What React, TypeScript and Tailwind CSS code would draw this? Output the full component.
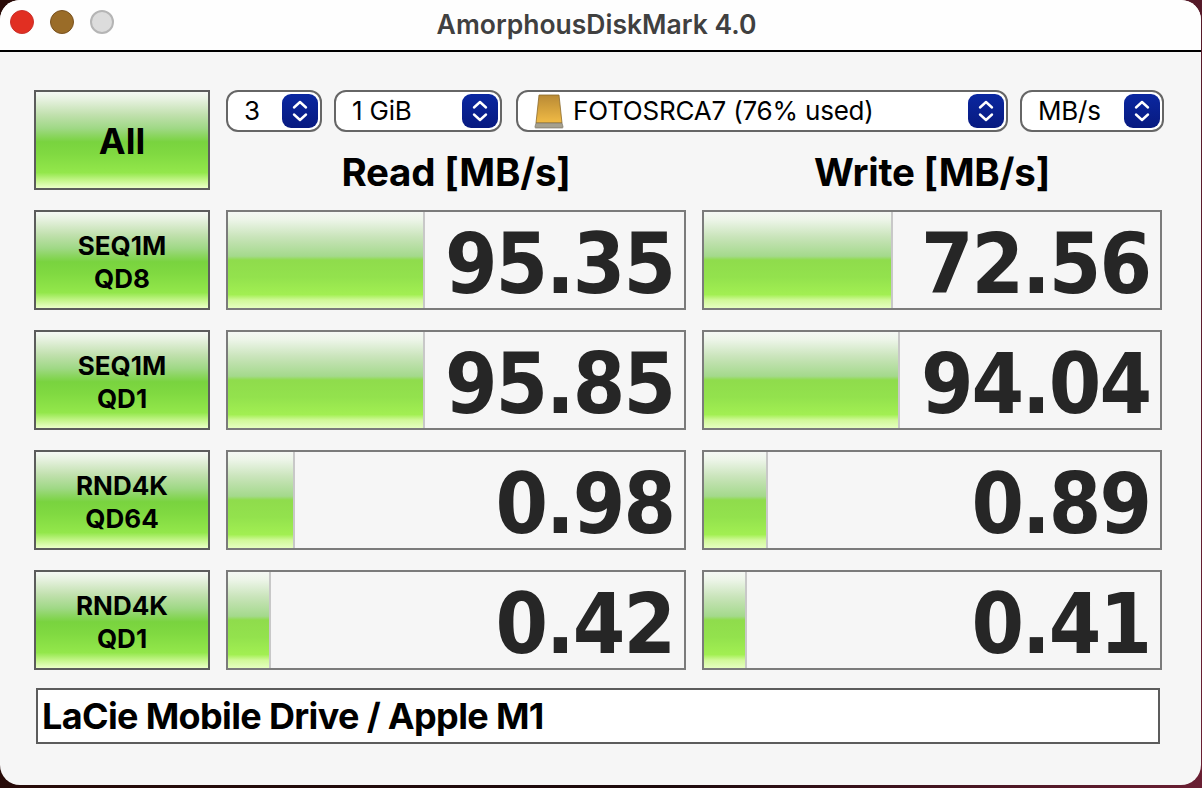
import React from "react"

const sans = "font-['Inter','Liberation_Sans',sans-serif]"
const buttonGloss =
  "bg-[linear-gradient(to_bottom,#f5f8f4_0%,#e6f1df_8%,#c0e0ad_24%,#9fd885_38%,#79d33f_52%,#80d941_64%,#93e74b_84%,#c4f58a_92%,#ebffc8_100%)]"
const barGloss =
  "bg-[linear-gradient(to_bottom,#f5f8f4_0%,#edf5e9_8%,#c9e4ba_26%,#a4d98c_46%,#8fdc4c_50%,#93e24d_68%,#a2ef52_86%,#d2f99a_92%,#e6ffc0_100%)]"

function Stepper() {
  return (
    <span className="flex h-[34px] w-9 shrink-0 items-center justify-center rounded-[9px] bg-gradient-to-b from-[#0a27a0] to-[#081a80]">
      <svg width="16" height="24" viewBox="0 0 16 24" fill="none" stroke="white" strokeWidth="2.4" strokeLinecap="round" strokeLinejoin="round">
        <path d="M2 8.5 8 3l6 5.5" />
        <path d="M2 15.5 8 21l6-5.5" />
      </svg>
    </span>
  )
}

function DriveIcon() {
  return (
    <svg width="30" height="36" viewBox="0 0 30 36" className="shrink-0">
      <defs>
        <linearGradient id="drive" x1="0" y1="0" x2="0" y2="1">
          <stop offset="0" stopColor="#b98a35" />
          <stop offset="1" stopColor="#f1bb45" />
        </linearGradient>
      </defs>
      <path d="M5 2h20l3 28H2z" fill="url(#drive)" stroke="#8a6a2c" strokeWidth="0.8" />
      <path d="M2 30h26l1 3.5a1 1 0 0 1-1 1.5H2a1 1 0 0 1-1-1.5z" fill="#a5a08f" stroke="#6f6a5c" strokeWidth="0.6" />
    </svg>
  )
}

function Select({ width, children }: { width: string; children: React.ReactNode }) {
  return (
    <div className={`flex h-[42px] ${width} items-center rounded-[12px] border-2 border-[#666] bg-white pr-[2px] text-[26px] leading-none tracking-[-0.2px] text-black`}>
      {children}
      <Stepper />
    </div>
  )
}

function RunButton({ lines, large }: { lines: string[]; large?: boolean }) {
  return (
    <div className={`flex h-[100px] w-[176px] shrink-0 flex-col items-center justify-center border-2 border-[#5c5c5c] font-bold text-black ${buttonGloss} ${large ? "pt-[1px] text-[36px]" : "pt-[3px] text-[26px] leading-[33px]"}`}>
      {lines.map((l) => (
        <span key={l}>{l}</span>
      ))}
    </div>
  )
}

function Meter({ value, fill }: { value: string; fill: number }) {
  return (
    <div className="flex h-[100px] w-[460px] border-2 border-[#7b7b7b] bg-[#f6f6f6]">
      <div className={`shrink-0 border-r-2 border-[#c8c8c8] ${barGloss}`} style={{ width: fill }} />
      <div className="flex flex-1 items-center justify-end pt-[8px] pr-[10px] font-['DejaVu_Sans',sans-serif] text-[84px] leading-none font-bold font-stretch-condensed tracking-[-2px] text-[#262626]">{value}</div>
    </div>
  )
}

const rows = [
  { lines: ["SEQ1M", "QD8"], read: "95.35", readFill: 197, write: "72.56", writeFill: 189 },
  { lines: ["SEQ1M", "QD1"], read: "95.85", readFill: 197, write: "94.04", writeFill: 196 },
  { lines: ["RND4K", "QD64"], read: "0.98", readFill: 67, write: "0.89", writeFill: 64 },
  { lines: ["RND4K", "QD1"], read: "0.42", readFill: 43, write: "0.41", writeFill: 43 },
]

export default function App() {
  return (
    <div className={`h-[788px] w-[1202px] overflow-hidden bg-[linear-gradient(100deg,#2a0b08_0%,#1c0a0c_60%,#6a1f33_100%)] ${sans}`}>
      <div className="h-[785px] w-[1201px] overflow-hidden rounded-[20px] bg-[#f6f6f6]">
        {/* title bar */}
        <div className="relative flex h-[52px] items-center justify-center border-b-2 border-black bg-[#fefefe]">
          <div className="absolute left-[10px] top-[10px] flex gap-[16px]">
            <span className="h-6 w-6 rounded-full border border-[#c9302a] bg-[#e12f22]" />
            <span className="h-6 w-6 rounded-full border border-[#7a5220] bg-[#9a6c28]" />
            <span className="h-6 w-6 rounded-full border-2 border-[#b5b5b5] bg-[#dcdcdc]" />
          </div>
          <span className="-ml-[8px] text-[26.5px] font-semibold text-[#404040]">AmorphousDiskMark 4.0</span>
        </div>

        <div className="flex flex-col gap-5 pl-[34px] pt-[38px]">
          {/* top row */}
          <div className="flex gap-4">
            <RunButton lines={["All"]} large />
            <div className="flex flex-col">
              <div className="flex w-[938px] items-center gap-3">
                <Select width="w-[96px]">
                  <span className="flex-1 pl-4">3</span>
                </Select>
                <Select width="w-[168px]">
                  <span className="flex-1 pl-4">1 GiB</span>
                </Select>
                <div className="ml-[2px]">
                  <Select width="w-[492px]">
                    <span className="flex flex-1 items-center gap-[9px] pl-4">
                      <DriveIcon />
                      FOTOSRCA7 (76% used)
                    </span>
                  </Select>
                </div>
                <Select width="w-[144px]">
                  <span className="flex-1 pl-4">MB/s</span>
                </Select>
              </div>
              <div className="flex items-start gap-4 pt-[22px] text-[38.5px] leading-[36px] font-bold tracking-[-0.2px] text-black">
                <div className="w-[460px] text-center">Read [MB/s]</div>
                <div className="w-[460px] text-center">Write [MB/s]</div>
              </div>
            </div>
          </div>

          {rows.map((r) => (
            <div key={r.lines.join()} className="flex gap-4">
              <RunButton lines={r.lines} />
              <Meter value={r.read} fill={r.readFill} />
              <Meter value={r.write} fill={r.writeFill} />
            </div>
          ))}

          {/* comment box */}
          <div className="-mt-[2px] ml-[2px] flex h-[56px] w-[1124px] items-center border-2 border-[#5c5c5c] bg-white pl-[4px] text-[36px] font-bold tracking-[-0.65px] text-black">
            LaCie Mobile Drive / Apple M1
          </div>
        </div>
      </div>
    </div>
  )
}
